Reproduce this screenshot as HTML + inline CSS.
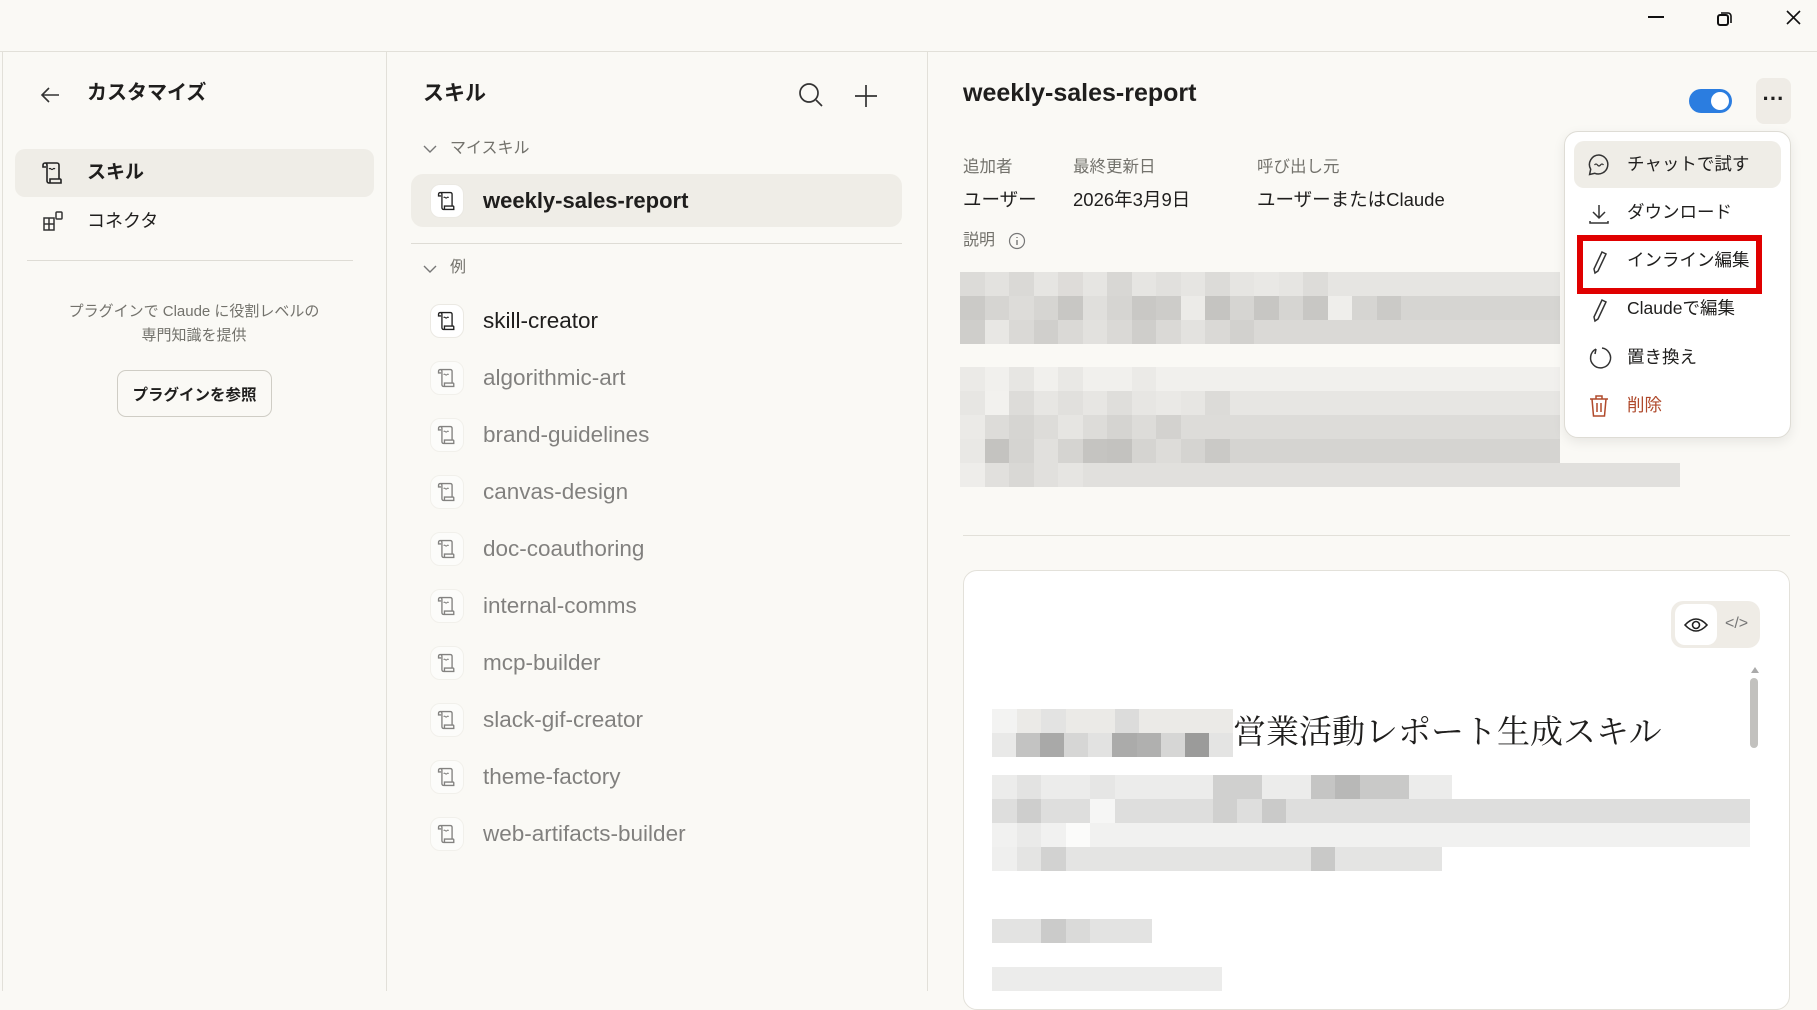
<!DOCTYPE html>
<html><head><meta charset="utf-8"><style>
*{box-sizing:border-box;margin:0;padding:0}
body{width:1817px;height:991px;overflow:hidden;background:#faf9f5;font-family:"Liberation Sans","Noto Sans CJK JP",sans-serif;color:#1f1e1d;position:relative}
.abs{position:absolute}
.t{position:absolute;white-space:nowrap;line-height:1}
.row{display:flex;height:24px}
.row span{display:block;width:24.5px;height:24px}
.ico{position:absolute;width:34px;height:34px;border-radius:10px;background:#fff;border:1px solid #ebe9e3;display:flex;align-items:center;justify-content:center}
.item{position:absolute;left:420px;height:40px}
.item .ico{left:10px;top:3px}
.item .t{left:63px;top:9px;font-size:22.5px}
.dim{opacity:.55}
.menu .t{font-size:17.5px}
</style></head><body>
<div class="abs" style="left:0;top:51px;width:1817px;height:1px;background:#e2e0d9"></div>
<svg class="abs" style="left:1640px;top:8px" width="170" height="30" viewBox="0 0 170 30"><path d="M8 9h16" stroke="#111" stroke-width="2"/><rect x="78" y="7" width="10" height="10" rx="2" fill="none" stroke="#111" stroke-width="2"/><path d="M81 5h7a3 3 0 0 1 3 3v7" fill="none" stroke="#111" stroke-width="1.6"/><path d="M147 3l13 13M160 3l-13 13" stroke="#111" stroke-width="1.6"/></svg>
<div class="abs" style="left:2px;top:52px;width:1px;height:939px;background:#e2e0d9"></div>
<div class="abs" style="left:386px;top:52px;width:1px;height:939px;background:#e2e0d9"></div>
<div class="abs" style="left:927px;top:52px;width:1px;height:939px;background:#e2e0d9"></div>

<svg class="abs" style="left:38px;top:83px" width="24" height="24" viewBox="0 0 24 24"><path d="M21 12H4M11 5l-7 7 7 7" fill="none" stroke="#333" stroke-width="1.6"/></svg>
<div class="t" style="left:87px;top:83px;font-size:20px;font-weight:bold">カスタマイズ</div>
<div class="abs" style="left:15px;top:149px;width:359px;height:48px;border-radius:10px;background:#efede7"></div>
<svg class="abs" style="left:40px;top:160px" width="26" height="26" viewBox="0 0 26 26"><path d="M5 3h12a2 2 0 0 1 2 2v14M5 3a2 2 0 0 0-2 2v2h3M5 3a2 2 0 0 1 2 2v16a2 2 0 0 0 2 2h12v-3a1 1 0 0 0-1-1H10v4" fill="none" stroke="#222" stroke-width="1.6"/><path d="M9 9q1-1 2 0t2 0t2 0" fill="none" stroke="#222" stroke-width="1.2"/></svg>
<div class="t" style="left:87px;top:163px;font-size:19px;font-weight:bold">スキル</div>
<svg class="abs" style="left:41px;top:209px" width="24" height="24" viewBox="0 0 24 24"><rect x="3" y="9" width="10" height="12" fill="none" stroke="#333" stroke-width="1.5"/><path d="M3 15h10M8 9v12" stroke="#333" stroke-width="1.5"/><rect x="15" y="3" width="6" height="7" rx="1" fill="none" stroke="#333" stroke-width="1.5"/></svg>
<div class="t" style="left:87px;top:212px;font-size:18px">コネクタ</div>
<div class="abs" style="left:27px;top:260px;width:326px;height:1px;background:#dedcd5"></div>
<div class="t" style="left:0;width:388px;text-align:center;top:300px;font-size:15px;color:#73726c;line-height:24px">プラグインで Claude に役割レベルの<br>専門知識を提供</div>
<div class="abs" style="left:117px;top:370px;width:155px;height:47px;border:1px solid #cfcdc5;border-radius:9px;background:#faf9f5;font-size:15.5px;font-weight:bold;display:flex;align-items:center;justify-content:center">プラグインを参照</div>

<div class="t" style="left:423px;top:83px;font-size:21px;font-weight:bold">スキル</div>
<svg class="abs" style="left:797px;top:81px" width="28" height="28" viewBox="0 0 28 28"><circle cx="12" cy="12" r="9" fill="none" stroke="#333" stroke-width="1.7"/><path d="M19 19l6 6" stroke="#333" stroke-width="1.7"/></svg>
<svg class="abs" style="left:852px;top:82px" width="28" height="28" viewBox="0 0 28 28"><path d="M14 3v22M3 14h22" stroke="#333" stroke-width="1.7"/></svg>
<svg class="abs" style="left:421px;top:142px" width="18" height="14" viewBox="0 0 18 14"><path d="M3 4l6 6 6-6" fill="none" stroke="#777" stroke-width="1.4"/></svg>
<div class="t" style="left:450px;top:141px;font-size:16px;color:#73726c">マイスキル</div>
<div class="abs" style="left:411px;top:174px;width:491px;height:53px;border-radius:12px;background:#efede7"></div>
<div class="item" style="top:181px"><div class="ico"><svg width="22" height="22" viewBox="0 0 26 26"><path d="M5 3h12a2 2 0 0 1 2 2v14M5 3a2 2 0 0 0-2 2v2h3M5 3a2 2 0 0 1 2 2v16a2 2 0 0 0 2 2h12v-3a1 1 0 0 0-1-1H10v4" fill="none" stroke="#222" stroke-width="1.6"/><path d="M9 9q1-1 2 0t2 0t2 0" fill="none" stroke="#222" stroke-width="1.2"/></svg></div><div class="t" style="font-weight:bold;font-size:22px">weekly-sales-report</div></div>
<div class="abs" style="left:411px;top:243px;width:491px;height:1px;background:#dedcd5"></div>
<svg class="abs" style="left:421px;top:262px" width="18" height="14" viewBox="0 0 18 14"><path d="M3 4l6 6 6-6" fill="none" stroke="#777" stroke-width="1.4"/></svg>
<div class="t" style="left:450px;top:260px;font-size:16px;color:#73726c">例</div>

<div class="item" style="top:301px"><div class="ico"><svg width="22" height="22" viewBox="0 0 26 26"><path d="M5 3h12a2 2 0 0 1 2 2v14M5 3a2 2 0 0 0-2 2v2h3M5 3a2 2 0 0 1 2 2v16a2 2 0 0 0 2 2h12v-3a1 1 0 0 0-1-1H10v4" fill="none" stroke="#222" stroke-width="1.6"/><path d="M9 9q1-1 2 0t2 0t2 0" fill="none" stroke="#222" stroke-width="1.2"/></svg></div><div class="t">skill-creator</div></div>
<div class="item dim" style="top:358px"><div class="ico"><svg width="22" height="22" viewBox="0 0 26 26"><path d="M5 3h12a2 2 0 0 1 2 2v14M5 3a2 2 0 0 0-2 2v2h3M5 3a2 2 0 0 1 2 2v16a2 2 0 0 0 2 2h12v-3a1 1 0 0 0-1-1H10v4" fill="none" stroke="#222" stroke-width="1.6"/><path d="M9 9q1-1 2 0t2 0t2 0" fill="none" stroke="#222" stroke-width="1.2"/></svg></div><div class="t">algorithmic-art</div></div>
<div class="item dim" style="top:415px"><div class="ico"><svg width="22" height="22" viewBox="0 0 26 26"><path d="M5 3h12a2 2 0 0 1 2 2v14M5 3a2 2 0 0 0-2 2v2h3M5 3a2 2 0 0 1 2 2v16a2 2 0 0 0 2 2h12v-3a1 1 0 0 0-1-1H10v4" fill="none" stroke="#222" stroke-width="1.6"/><path d="M9 9q1-1 2 0t2 0t2 0" fill="none" stroke="#222" stroke-width="1.2"/></svg></div><div class="t">brand-guidelines</div></div>
<div class="item dim" style="top:472px"><div class="ico"><svg width="22" height="22" viewBox="0 0 26 26"><path d="M5 3h12a2 2 0 0 1 2 2v14M5 3a2 2 0 0 0-2 2v2h3M5 3a2 2 0 0 1 2 2v16a2 2 0 0 0 2 2h12v-3a1 1 0 0 0-1-1H10v4" fill="none" stroke="#222" stroke-width="1.6"/><path d="M9 9q1-1 2 0t2 0t2 0" fill="none" stroke="#222" stroke-width="1.2"/></svg></div><div class="t">canvas-design</div></div>
<div class="item dim" style="top:529px"><div class="ico"><svg width="22" height="22" viewBox="0 0 26 26"><path d="M5 3h12a2 2 0 0 1 2 2v14M5 3a2 2 0 0 0-2 2v2h3M5 3a2 2 0 0 1 2 2v16a2 2 0 0 0 2 2h12v-3a1 1 0 0 0-1-1H10v4" fill="none" stroke="#222" stroke-width="1.6"/><path d="M9 9q1-1 2 0t2 0t2 0" fill="none" stroke="#222" stroke-width="1.2"/></svg></div><div class="t">doc-coauthoring</div></div>
<div class="item dim" style="top:586px"><div class="ico"><svg width="22" height="22" viewBox="0 0 26 26"><path d="M5 3h12a2 2 0 0 1 2 2v14M5 3a2 2 0 0 0-2 2v2h3M5 3a2 2 0 0 1 2 2v16a2 2 0 0 0 2 2h12v-3a1 1 0 0 0-1-1H10v4" fill="none" stroke="#222" stroke-width="1.6"/><path d="M9 9q1-1 2 0t2 0t2 0" fill="none" stroke="#222" stroke-width="1.2"/></svg></div><div class="t">internal-comms</div></div>
<div class="item dim" style="top:643px"><div class="ico"><svg width="22" height="22" viewBox="0 0 26 26"><path d="M5 3h12a2 2 0 0 1 2 2v14M5 3a2 2 0 0 0-2 2v2h3M5 3a2 2 0 0 1 2 2v16a2 2 0 0 0 2 2h12v-3a1 1 0 0 0-1-1H10v4" fill="none" stroke="#222" stroke-width="1.6"/><path d="M9 9q1-1 2 0t2 0t2 0" fill="none" stroke="#222" stroke-width="1.2"/></svg></div><div class="t">mcp-builder</div></div>
<div class="item dim" style="top:700px"><div class="ico"><svg width="22" height="22" viewBox="0 0 26 26"><path d="M5 3h12a2 2 0 0 1 2 2v14M5 3a2 2 0 0 0-2 2v2h3M5 3a2 2 0 0 1 2 2v16a2 2 0 0 0 2 2h12v-3a1 1 0 0 0-1-1H10v4" fill="none" stroke="#222" stroke-width="1.6"/><path d="M9 9q1-1 2 0t2 0t2 0" fill="none" stroke="#222" stroke-width="1.2"/></svg></div><div class="t">slack-gif-creator</div></div>
<div class="item dim" style="top:757px"><div class="ico"><svg width="22" height="22" viewBox="0 0 26 26"><path d="M5 3h12a2 2 0 0 1 2 2v14M5 3a2 2 0 0 0-2 2v2h3M5 3a2 2 0 0 1 2 2v16a2 2 0 0 0 2 2h12v-3a1 1 0 0 0-1-1H10v4" fill="none" stroke="#222" stroke-width="1.6"/><path d="M9 9q1-1 2 0t2 0t2 0" fill="none" stroke="#222" stroke-width="1.2"/></svg></div><div class="t">theme-factory</div></div>
<div class="item dim" style="top:814px"><div class="ico"><svg width="22" height="22" viewBox="0 0 26 26"><path d="M5 3h12a2 2 0 0 1 2 2v14M5 3a2 2 0 0 0-2 2v2h3M5 3a2 2 0 0 1 2 2v16a2 2 0 0 0 2 2h12v-3a1 1 0 0 0-1-1H10v4" fill="none" stroke="#222" stroke-width="1.6"/><path d="M9 9q1-1 2 0t2 0t2 0" fill="none" stroke="#222" stroke-width="1.2"/></svg></div><div class="t">web-artifacts-builder</div></div>

<div class="t" style="left:963px;top:81px;font-size:25px;font-weight:bold">weekly-sales-report</div>
<div class="abs" style="left:1689px;top:89px;width:43px;height:24px;border-radius:12px;background:#2b7de0"></div>
<div class="abs" style="left:1711px;top:92px;width:18px;height:18px;border-radius:9px;background:#fff"></div>
<div class="abs" style="left:1756px;top:78px;width:35px;height:46px;border-radius:8px;background:#efece6"></div>
<div class="t" style="left:1759px;top:88px;width:29px;text-align:center;font-size:22px;font-weight:bold">···</div>
<div class="t" style="left:963px;top:159px;font-size:16.5px;color:#73726c">追加者</div>
<div class="t" style="left:1073px;top:159px;font-size:16.5px;color:#73726c">最終更新日</div>
<div class="t" style="left:1257px;top:159px;font-size:16.5px;color:#73726c">呼び出し元</div>
<div class="t" style="left:963px;top:191px;font-size:18.5px">ユーザー</div>
<div class="t" style="left:1073px;top:191px;font-size:18.5px">2026年3月9日</div>
<div class="t" style="left:1257px;top:191px;font-size:18.5px">ユーザーまたはClaude</div>
<div class="t" style="left:963px;top:233px;font-size:16px;color:#73726c">説明</div>
<svg class="abs" style="left:1008px;top:232px" width="18" height="18" viewBox="0 0 18 18"><circle cx="9" cy="9" r="7.5" fill="none" stroke="#777" stroke-width="1.2"/><path d="M9 8v5M9 5v1" stroke="#777" stroke-width="1.4"/></svg>

<div class="abs" style="left:960px;top:272px;width:600px">
<div class="row" style="background:#e6e5e2"><span style="background:#dcdbd8"></span><span style="background:#e3e2df"></span><span style="background:#dad9d6"></span><span></span><span style="background:#dedcd9"></span><span></span><span style="background:#d8d7d4"></span><span></span><span style="background:#e1e0dd"></span><span></span><span style="background:#dcdbd8"></span><span></span><span style="background:#e9e8e5"></span><span></span><span style="background:#dddcd9"></span></div>
<div class="row" style="background:#d6d5d2"><span style="background:#cbcac7"></span><span></span><span style="background:#dddcd9"></span><span></span><span style="background:#c8c7c4"></span><span style="background:#e0dfdc"></span><span></span><span style="background:#c9c8c5"></span><span style="background:#cdccc9"></span><span style="background:#ecebe8"></span><span style="background:#c5c4c1"></span><span></span><span style="background:#c7c6c3"></span><span></span><span style="background:#c8c7c4"></span><span style="background:#efeeeb"></span><span></span><span style="background:#cbcac7"></span></div>
<div class="row" style="background:#dad9d6"><span style="background:#cfcecb"></span><span style="background:#e8e7e4"></span><span></span><span style="background:#d0cfcc"></span><span></span><span style="background:#e2e1de"></span><span></span><span style="background:#cfcecb"></span><span></span><span style="background:#e3e2df"></span><span></span><span style="background:#d2d1ce"></span></div>
</div>
<div class="abs" style="left:960px;top:367px;width:600px">
<div class="row" style="background:#f1f0ed"><span style="background:#ebeae7"></span><span></span><span style="background:#e7e6e3"></span><span></span><span style="background:#e9e8e5"></span><span></span><span></span><span style="background:#ebeae7"></span></div>
<div class="row" style="background:#e7e6e3"><span></span><span style="background:#f2f1ee"></span><span style="background:#dddcd9"></span><span></span><span style="background:#e1e0dd"></span><span></span><span style="background:#dfdedb"></span><span></span><span style="background:#eae9e6"></span><span></span><span style="background:#dcdbd8"></span></div>
<div class="row" style="background:#dddcd9"><span style="background:#ebeae7"></span><span></span><span style="background:#d6d5d2"></span><span></span><span style="background:#e6e5e2"></span><span></span><span style="background:#d5d4d1"></span><span></span><span style="background:#d3d2cf"></span></div>
<div class="row" style="background:#d5d4d1"><span style="background:#e9e8e5"></span><span style="background:#c4c3c0"></span><span></span><span style="background:#e1e0dd"></span><span></span><span style="background:#c5c4c1"></span><span style="background:#c3c2bf"></span><span></span><span style="background:#dddcd9"></span><span></span><span style="background:#cac9c6"></span></div>
<div class="row" style="background:#e1e0dd;width:720px"><span style="background:#eeedea"></span><span></span><span style="background:#d9d8d5"></span><span></span><span style="background:#e6e5e2"></span></div>
</div>
<div class="abs" style="left:963px;top:535px;width:827px;height:1px;background:#e2e0d9"></div>

<div class="abs" style="left:963px;top:570px;width:827px;height:440px;background:#fff;border:1px solid #e3e1da;border-radius:14px"></div>
<div class="abs" style="left:1671px;top:601px;width:89px;height:47px;border-radius:12px;background:#efece6"></div>
<div class="abs" style="left:1675px;top:604px;width:42px;height:41px;border-radius:10px;background:#fff"></div>
<svg class="abs" style="left:1683px;top:614px" width="26" height="22" viewBox="0 0 26 22"><path d="M2 11q11-12 22 0q-11 12-22 0z" fill="none" stroke="#222" stroke-width="1.6"/><circle cx="13" cy="11" r="3.5" fill="none" stroke="#222" stroke-width="1.6"/></svg>
<div class="t" style="left:1725px;top:616px;font-size:16px;color:#777">&lt;/&gt;</div>
<div class="abs" style="left:1751px;top:667px;width:0;height:0;border-left:4px solid transparent;border-right:4px solid transparent;border-bottom:6px solid #aaa"></div>
<div class="abs" style="left:1750px;top:678px;width:8px;height:70px;border-radius:4px;background:#c2c1be"></div>
<div class="abs" style="left:992px;top:709px;width:241px">
<div class="row" style="background:#ebeae7"><span style="background:#f3f3f2"></span><span></span><span style="background:#e3e3e2"></span><span></span><span></span><span style="background:#dcdcdb"></span></div>
<div class="row" style="background:#d6d6d5"><span style="background:#e9e9e8"></span><span style="background:#c3c3c2"></span><span style="background:#a9a9a8"></span><span></span><span style="background:#e2e2e1"></span><span style="background:#ababaa"></span><span style="background:#b0b0af"></span><span></span><span style="background:#9b9b9a"></span><span style="background:#e4e4e3"></span></div>
</div>
<div class="t" style="left:1233px;top:717px;font-size:33px;font-family:'Liberation Serif','Noto Serif CJK SC',serif">営業活動レポート生成スキル</div>
<div class="abs" style="left:992px;top:775px;width:758px">
<div class="row" style="background:#ececeb;width:460px"><span></span><span style="background:#e3e3e2"></span><span></span><span></span><span style="background:#e6e6e5"></span><span></span><span></span><span></span><span></span><span style="background:#d0d0cf"></span><span style="background:#d0d0cf"></span><span></span><span></span><span style="background:#c5c5c4"></span><span style="background:#b8b8b7"></span><span style="background:#c9c9c8"></span><span style="background:#c9c9c8"></span></div>
<div class="row" style="background:#dededd"><span></span><span style="background:#cececd"></span><span></span><span></span><span style="background:#f6f6f5"></span><span></span><span></span><span></span><span></span><span style="background:#d0d0cf"></span><span></span><span style="background:#cacac9"></span></div>
<div class="row" style="background:#f1f1f0"><span></span><span style="background:#eaeae9"></span><span></span><span style="background:#fbfbfa"></span></div>
<div class="row" style="background:#e4e4e3;width:450px"><span style="background:#efefee"></span><span></span><span style="background:#d2d2d1"></span><span></span><span></span><span></span><span></span><span></span><span></span><span></span><span></span><span></span><span></span><span style="background:#c9c9c8"></span></div>
</div>
<div class="abs" style="left:992px;top:919px;width:160px"><div class="row" style="background:#e3e3e2"><span></span><span></span><span style="background:#cbcbca"></span><span style="background:#dadad9"></span></div></div>
<div class="abs" style="left:992px;top:967px;width:230px;height:24px;background:#ececeb"></div>

<div class="abs menu" style="left:1564px;top:131px;width:227px;height:307px;background:#fff;border:1px solid #dedcd5;border-radius:14px;box-shadow:0 4px 12px rgba(0,0,0,.08)">
<div class="abs" style="left:9px;top:9px;width:207px;height:47px;border-radius:10px;background:#efede7"></div>
<svg class="abs" style="left:22px;top:21px" width="24" height="24" viewBox="0 0 24 24"><path d="M12 2a9.5 9.5 0 0 0-8.3 14.2L2.6 21.5l5.2-1.2A9.5 9.5 0 1 0 12 2z" fill="none" stroke="#333" stroke-width="1.5"/><path d="M7.5 12q1.5-2 3 0t3 0t3 0" fill="none" stroke="#333" stroke-width="1.3"/></svg>
<div class="t" style="left:62px;top:24px">チャットで試す</div>
<svg class="abs" style="left:22px;top:70px" width="24" height="24" viewBox="0 0 24 24"><path d="M12 3v13M6 10l6 6 6-6M3 19v2h18v-2" fill="none" stroke="#333" stroke-width="1.5"/></svg>
<div class="t" style="left:62px;top:72px">ダウンロード</div>
<div class="abs" style="left:12px;top:103px;width:185px;height:59px;border:6px solid #e00000"></div>
<svg class="abs" style="left:22px;top:117px" width="24" height="26" viewBox="0 0 24 26"><path d="M15 3l4 2-8 17-3 2-1-4z" fill="none" stroke="#333" stroke-width="1.5"/></svg>
<div class="t" style="left:62px;top:120px">インライン編集</div>
<svg class="abs" style="left:22px;top:165px" width="24" height="26" viewBox="0 0 24 26"><path d="M15 3l4 2-8 17-3 2-1-4z" fill="none" stroke="#333" stroke-width="1.5"/></svg>
<div class="t" style="left:62px;top:168px">Claudeで編集</div>
<svg class="abs" style="left:22px;top:213px" width="26" height="26" viewBox="0 0 26 26"><path d="M9 4a10 10 0 1 0 6-1" fill="none" stroke="#333" stroke-width="1.5"/><path d="M9 4l-1 5" stroke="#333" stroke-width="1.5"/></svg>
<div class="t" style="left:62px;top:217px">置き換え</div>
<svg class="abs" style="left:22px;top:261px" width="24" height="26" viewBox="0 0 24 26"><path d="M3 6h18M9 6V3h6v3M5 6l1.5 17h11L19 6M10 10v9M14 10v9" fill="none" stroke="#b04a2c" stroke-width="1.5"/></svg>
<div class="t" style="left:62px;top:265px;color:#b04a2c">削除</div>
</div>
</body></html>
